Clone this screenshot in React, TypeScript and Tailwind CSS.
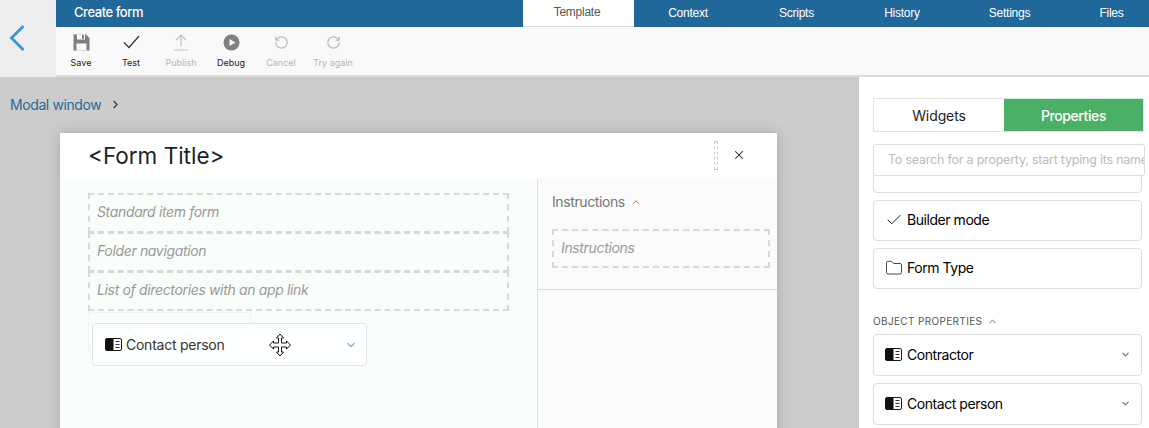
import { ChevronDown, ChevronRight, ChevronUp, Check, Folder, X, RotateCcw, RotateCw } from 'lucide-react';

function BookIcon({ className }: { className?: string }) {
  return (
    <svg viewBox="0 0 17 13" className={className}>
      <rect x="0.5" y="0.5" width="16" height="12" rx="1.5" fill="#fff" stroke="#1a1a1a" />
      <path d="M2 0.5h6.5v12H2a1.5 1.5 0 0 1-1.5-1.5V2A1.5 1.5 0 0 1 2 0.5z" fill="#111" />
      <path d="M10.5 3.5h4M10.5 6.5h4M10.5 9.5h4" stroke="#333" strokeWidth="1" />
    </svg>
  );
}

function ToolItem({ label, disabled, width, children }: { label: string; disabled?: boolean; width: string; children: React.ReactNode }) {
  return (
    <div className={`flex flex-col items-center ${width}`}>
      <div className="h-[24px] flex items-center justify-center">{children}</div>
      <span className={`text-[9px] mt-[3px] leading-[12px] ${disabled ? 'text-[#b5b5b5]' : 'text-[#222]'}`}>{label}</span>
    </div>
  );
}

function DropZone({ label, className }: { label: string; className?: string }) {
  return (
    <div className={`border-2 border-dashed border-[#d8d8d8] h-[40px] pl-[7px] pb-[3px] flex items-center italic text-[14px] tracking-[-0.35px] text-[#999] ${className ?? ''}`}>
      {label}
    </div>
  );
}

function PropCard({ icon, label, arrow }: { icon: React.ReactNode; label: string; arrow?: boolean }) {
  return (
    <div className="h-[41px] w-[269px] border border-[#ddd] rounded-[4px] flex items-center pl-[11px] pr-[10px] pb-[2px] text-[14px] tracking-[-0.45px] text-black bg-white">
      <span className="w-[22px] shrink-0 flex items-center">{icon}</span>
      <span>{label}</span>
      {arrow && <ChevronDown className="ml-auto text-[#4f7299]" size={11} strokeWidth={2.2} />}
    </div>
  );
}

export default function App() {
  return (
    <div className="relative w-[1149px] h-[428px] overflow-hidden bg-[#cccccc] font-['Inter',sans-serif] flex flex-col">
      <div className="flex h-[77px] shrink-0">
        <div className="w-[56px] bg-[#eeeeee] flex items-start pt-[24px] pl-[9px]">
          <svg width="16" height="28" viewBox="0 0 16 28" fill="none">
            <path d="M14.5 2 L2.5 14 L14.5 26" stroke="#3a94d6" strokeWidth="2.8" />
          </svg>
        </div>
        <div className="flex-1 flex flex-col">
          <div className="h-[27px] bg-[#20689a] flex items-stretch text-white text-[12px] tracking-[-0.25px] font-['Liberation_Sans',sans-serif]">
            <div className="w-[467px] pl-[18px] pb-[2px] flex items-center text-[13px] tracking-[-0.45px] font-medium font-['Inter',sans-serif]">Create form</div>
            <div className="w-[111px] bg-white text-[#555] border-b border-[#ddd] pr-[3px] pb-[2px] flex items-center justify-center">Template</div>
            <div className="w-[111px] pr-[3px] pb-[2px] flex items-center justify-center">Context</div>
            <div className="w-[105px] pr-[2px] pb-[2px] flex items-center justify-center">Scripts</div>
            <div className="w-[106px] pr-[2px] pb-[2px] flex items-center justify-center">History</div>
            <div className="w-[104px] pl-[3px] pb-[2px] flex items-center justify-center">Settings</div>
            <div className="flex-1 pl-[14px] pb-[2px] flex items-center justify-center">Files</div>
          </div>
          <div className="flex-1 bg-[#f9f9f9] border-b-2 border-[#dcdcdc] flex pt-[3px] pl-[7px]">
            <ToolItem label="Save" width="w-[36px]">
              <svg width="17" height="17" viewBox="0 0 17 17">
                <path d="M0.5 0.5h12.5l3.5 3.5v12.5h-16z" fill="#808080" />
                <rect x="4" y="0.5" width="8" height="5" fill="#f9f9f9" />
                <rect x="9" y="1.2" width="2" height="3.6" fill="#808080" />
                <rect x="3.5" y="9.5" width="10" height="7" fill="#f9f9f9" />
              </svg>
            </ToolItem>
            <ToolItem label="Test" width="w-[50px] ml-[7px]">
              <svg width="17" height="14" viewBox="0 0 17 14" fill="none" stroke="#333" strokeWidth="1.2">
                <path d="M1 7.5l5 5L16 1" />
              </svg>
            </ToolItem>
            <ToolItem label="Publish" disabled width="w-[50px]">
              <svg width="16" height="18" viewBox="0 0 16 18" fill="none" stroke="#c0c0c0" strokeWidth="1.2">
                <path d="M8 13V2M3 7l5-5 5 5M1 17h14" />
              </svg>
            </ToolItem>
            <ToolItem label="Debug" width="w-[50px]">
              <svg width="17" height="17" viewBox="0 0 17 17">
                <circle cx="8.5" cy="8.5" r="8" fill="#808080" />
                <path d="M6.5 5l6 3.5-6 3.5z" fill="#f9f9f9" />
              </svg>
            </ToolItem>
            <ToolItem label="Cancel" disabled width="w-[50px]">
              <RotateCcw size={15} className="text-[#bdbdbd]" strokeWidth={2} />
            </ToolItem>
            <ToolItem label="Try again" disabled width="w-[54px]">
              <RotateCw size={15} className="text-[#bdbdbd]" strokeWidth={2} />
            </ToolItem>
          </div>
        </div>
      </div>

      <div className="flex-1 flex min-h-0">
        <div className="w-[859px] shrink-0 min-w-0">
          <div className="h-[56px] pl-[10px] pt-[19px] flex items-start text-[14px] leading-[18px] tracking-[-0.4px] text-[#266a9b]">
            Modal window
            <ChevronRight size={13} className="ml-[8px] mt-[2px] text-[#333]" />
          </div>
          <div className="ml-[60px] w-[717px] h-[400px] bg-white shadow-[0_0_12px_rgba(0,0,0,0.18)]">
            <div className="h-[46px] flex items-center pl-[28px] pr-[31px] text-[22.5px] text-[#1f1f1f]">
              &lt;Form Title&gt;
              <div className="ml-auto mb-[2px] w-[4px] h-[29px] border border-dashed border-[#ccc]" />
              <X size={14} className="ml-[14px] mb-[2px] text-[#222]" strokeWidth={1.8} />
            </div>
            <div className="flex h-[354px]">
              <div className="w-[478px] bg-[#fafefb] border-r border-[#ddd] pt-[14px] pl-[28px] pr-[28px]">
                <DropZone label="Standard item form" />
                <DropZone label="Folder navigation" className="-mt-[1px]" />
                <DropZone label="List of directories with an app link" className="-mt-[1px]" />
              </div>
              <div className="flex-1 bg-[#fbfbfb]">
                <div className="h-[111px] border-b border-[#d9d9d9] pl-[14px] pr-[7px] pt-[14px]">
                  <div className="flex items-center text-[14px] leading-[18px] tracking-[-0.4px] text-[#777]">
                    Instructions
                    <ChevronUp size={10} className="ml-[6px] text-[#b5502f]" strokeWidth={2.2} />
                  </div>
                  <DropZone label="Instructions" className="mt-[18px] !h-[39px]" />
                </div>
              </div>
            </div>
          </div>
        </div>

        <div className="flex-1 bg-white pt-[21px] pl-[14px] min-w-0">
          <div className="w-[271px] h-[34px] border border-[#e3e3e3] flex text-[14px]">
            <div className="w-[130px] flex items-center justify-center tracking-[-0.1px] text-[#222]">Widgets</div>
            <div className="flex-1 bg-[#4caf67] text-white font-medium tracking-[-0.4px] flex items-center justify-center">Properties</div>
          </div>
          <div className="relative mt-[12px] h-[49px]">
            <div className="absolute left-0 top-[10px] w-[269px] h-[39px] border border-[#ddd] rounded-[4px] bg-white" />
            <div className="absolute left-0 top-0 w-[272px] h-[32px] border border-[#ddd] rounded-[3px] bg-white pl-[14px] flex items-center text-[12.5px] tracking-[-0.22px] text-[#bbb] overflow-hidden whitespace-nowrap">
              To search for a property, start typing its name
            </div>
          </div>
          <div className="mt-[7px] flex flex-col gap-[7px]">
            <PropCard label="Builder mode" icon={<Check size={18} strokeWidth={1.3} className="text-[#111]" />} />
            <PropCard label="Form Type" icon={<Folder size={18} strokeWidth={1.1} className="text-[#222]" />} />
          </div>
          <div className="mt-[25px] h-[14px] flex items-center text-[10px] tracking-[0.35px] text-[#555]">
            OBJECT PROPERTIES
            <ChevronUp size={11} className="ml-[5px] text-[#666]" />
          </div>
          <div className="mt-[6px] flex flex-col gap-[7px]">
            <div className="[&>div]:h-[42px]"><PropCard label="Contractor" arrow icon={<BookIcon className="w-[17px] h-[13px]" />} /></div>
            <div className="[&>div]:h-[42px]"><PropCard label="Contact person" arrow icon={<BookIcon className="w-[17px] h-[13px]" />} /></div>
          </div>
        </div>
      </div>

      {/* original card left behind while dragging */}
      <div className="absolute left-[88px] top-[312px] w-[163px] h-[42px] border border-[#f0f5f1] rounded-[3px] pl-[12px] flex items-center text-[14px] tracking-[-0.3px] text-[#d4d9d5]">
        <span className="w-[22px] h-[13px]" />
        Contact person
      </div>
      <div className="absolute left-[92px] top-[323px] w-[275px] h-[43px] bg-white/90 border border-[#e4e4e4] rounded-[4px] flex items-center pl-[12px] pr-[9px] text-[14px] tracking-[-0.25px] text-[#333]">
        <BookIcon className="w-[17px] h-[13px] mr-[4px]" />
        Contact person
        <ChevronDown size={12} className="ml-auto text-[#7fabd4]" strokeWidth={2.4} />
      </div>
      <svg className="absolute left-[268px] top-[333px]" width="24" height="24" viewBox="0 0 24 24">
        <path d="M12 1l3.5 4H13.5v5h5V8l4 4-4 4v-2h-5v5h2L12 23l-3.5-4h2v-5h-5v2l-4-4 4-4v2h5V5h-2z" fill="#fff" stroke="#111" strokeWidth="1" />
      </svg>
    </div>
  );
}
